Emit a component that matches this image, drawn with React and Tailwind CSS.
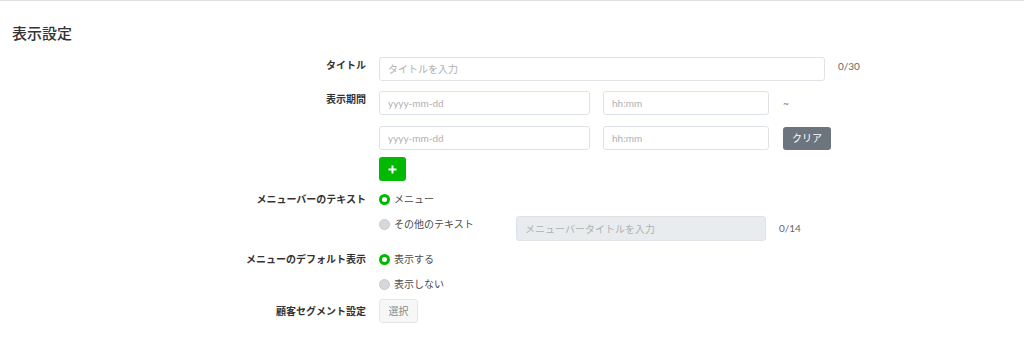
import React from 'react';

const font = { fontFamily: '"Lato", "Noto Sans CJK JP", sans-serif' };

const Label = ({ children, className = '' }) => (
  <div className={`w-[354px] shrink-0 text-right text-[10px] font-bold text-[#333] leading-[16px] ${className}`}>
    {children}
  </div>
);

const Input = ({ placeholder, className = '', disabled }) => (
  <input
    type="text"
    placeholder={placeholder}
    disabled={disabled}
    className={`h-[24px] rounded-[3px] border border-[#dfe2e6] px-2 text-[10px] text-[#333] placeholder:text-[#b0b0b0] outline-none ${
      disabled ? 'bg-[#e9ecef]' : 'bg-white'
    } ${className}`}
  />
);

const Radio = ({ checked, children }) => (
  <label className="flex items-center gap-[4px] h-[16px] text-[10px] text-[#4a4a4a]">
    {checked ? (
      <span className="w-[11px] h-[11px] rounded-full border-[3px] border-[#00b900] bg-white" />
    ) : (
      <span className="w-[11px] h-[11px] rounded-full border border-[#c9cbce] bg-[#d6d8db]" />
    )}
    <span>{children}</span>
  </label>
);

export default function App() {
  return (
    <div className="w-[1024px] h-[339px] bg-white border-t border-[#dedede] px-3" style={font}>
      <h2 className="pt-[21px] text-[15px] font-medium leading-[22px] text-[#333]">表示設定</h2>

      <div className="mt-[13px] flex flex-col">
        {/* タイトル */}
        <div className="flex items-start">
          <Label>タイトル</Label>
          <Input placeholder="タイトルを入力" className="ml-[13px] w-[446px]" />
          <span className="ml-[13px] pt-[1px] text-[10px] leading-[16px] text-[#666]">0/30</span>
        </div>

        {/* 表示期間 */}
        <div className="mt-[10px] flex items-start">
          <Label>表示期間</Label>
          <div className="ml-[13px] flex flex-col">
            <div className="flex items-center">
              <Input placeholder="yyyy-mm-dd" className="w-[211px]" />
              <Input placeholder="hh:mm" className="ml-[13px] w-[166px]" />
              <span className="ml-[14px] text-[10px] text-[#777]">~</span>
            </div>
            <div className="mt-[11px] flex items-center">
              <Input placeholder="yyyy-mm-dd" className="w-[211px]" />
              <Input placeholder="hh:mm" className="ml-[13px] w-[166px]" />
              <button className="ml-[14px] h-[23px] w-[48px] rounded-[3px] bg-[#6c757d] text-[10px] text-white">
                クリア
              </button>
            </div>
            <button className="mt-[7px] flex h-[24px] w-[27px] items-center justify-center rounded-[3px] bg-[#00b900]">
              <svg width="9" height="9" viewBox="0 0 9 9">
                <path d="M4.5 0.5v8M0.5 4.5h8" stroke="#fff" strokeWidth="2" />
              </svg>
            </button>
          </div>
        </div>

        {/* メニューバーのテキスト */}
        <div className="mt-[10px] flex items-start">
          <Label>メニューバーのテキスト</Label>
          <div className="ml-[13px] flex flex-col">
            <Radio checked>メニュー</Radio>
            <div className="mt-[9px] flex items-start">
              <div className="w-[137px]">
                <Radio>その他のテキスト</Radio>
              </div>
              <div className="flex items-center">
                <Input placeholder="メニューバータイトルを入力" disabled className="w-[250px] h-[25px]" />
                <span className="ml-[13px] text-[10px] text-[#666]">0/14</span>
              </div>
            </div>
          </div>
        </div>

        {/* メニューのデフォルト表示 */}
        <div className="mt-[10px] flex items-start">
          <Label>メニューのデフォルト表示</Label>
          <div className="ml-[13px] flex flex-col">
            <Radio checked>表示する</Radio>
            <div className="mt-[9px]">
              <Radio>表示しない</Radio>
            </div>
          </div>
        </div>

        {/* 顧客セグメント設定 */}
        <div className="mt-[7px] flex items-start">
          <Label className="leading-[24px]">顧客セグメント設定</Label>
          <button className="ml-[13px] h-[24px] w-[39px] rounded-[3px] border border-[#e6e6e6] bg-[#f7f7f7] text-[10px] text-[#888]">
            選択
          </button>
        </div>
      </div>
    </div>
  );
}
